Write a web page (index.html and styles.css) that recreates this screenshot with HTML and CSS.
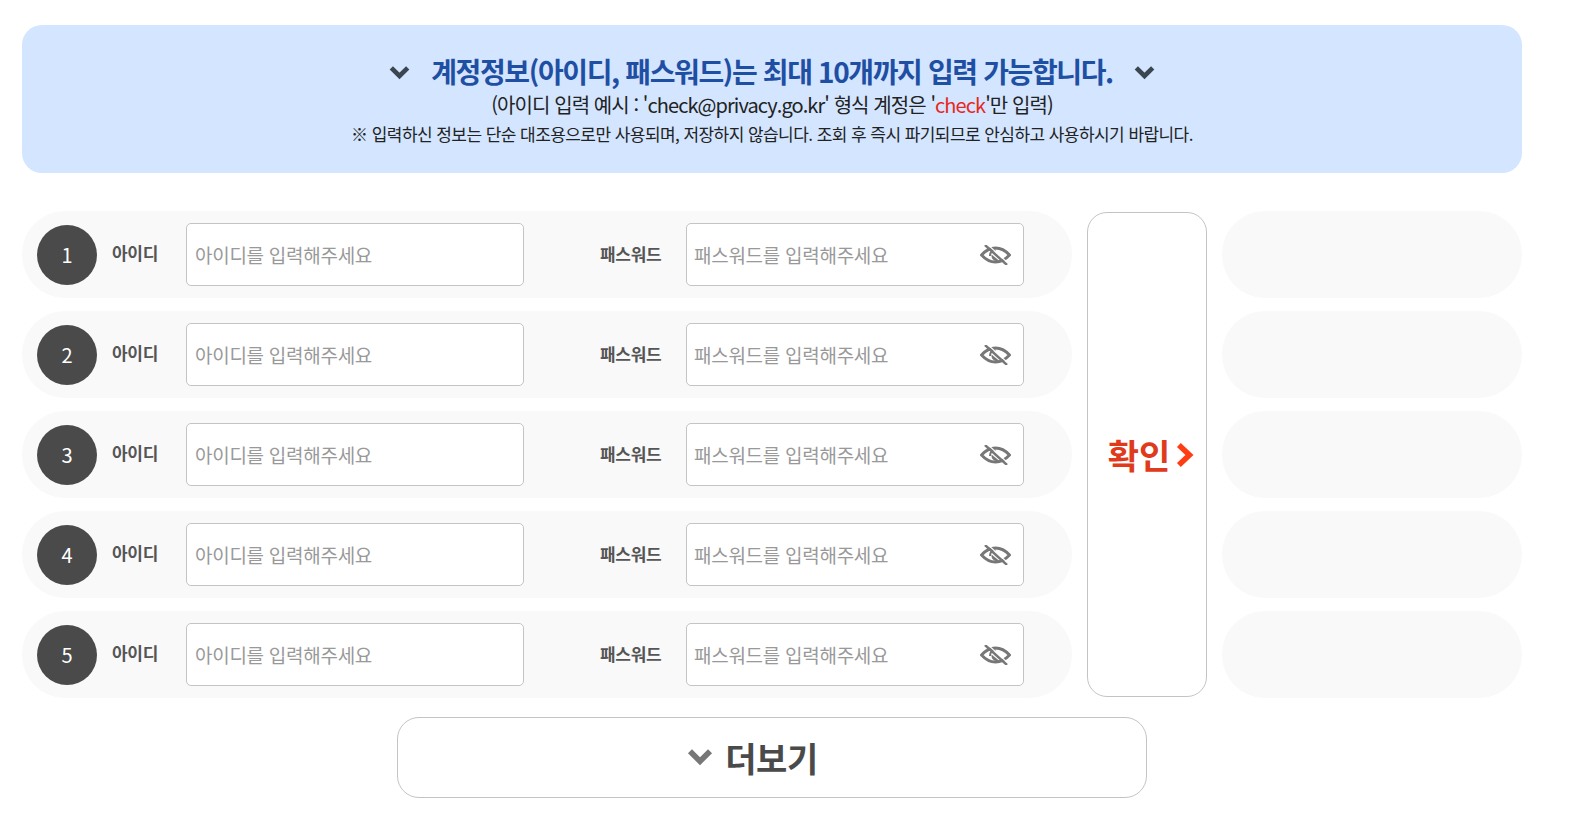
FILE: index.html
```html
<!DOCTYPE html>
<html lang="ko">
<head>
    <meta charset="UTF-8">
    <title>계정정보 입력</title>
    <link rel="stylesheet" href="styles.css">
</head>
<body>
    <svg width="0" height="0" class="defs">
        <symbol id="eye-off" viewBox="0 0 31 20">
            <path d="M1.500 10C6 5 10 3 15.500 3S25 5 29.500 10C25 15 21 17 15.500 17S6 15 1.500 10Z" fill="none" stroke="currentColor" stroke-width="2.800"/>
            <path d="M10 11a5.500 5.500 0 0 1 5.500-6" fill="none" stroke="currentColor" stroke-width="2"/>
            <path d="M11.500 9.500l8 6.500c-4 1-8.500-1-8-6.500Z" fill="currentColor"/>
            <path d="M5 0l22 20" fill="none" stroke="#fff" stroke-width="1.200" transform="translate(1.500 -1.500)"/>
            <path d="M5 0l22 20" fill="none" stroke="currentColor" stroke-width="2.400"/>
        </symbol>
        <symbol id="chev" viewBox="0 0 20 14">
            <path d="M2.200 2.500l7.800 7.800 7.800-7.800" fill="none" stroke="currentColor" stroke-width="4.400"/>
        </symbol>
    </svg>

    <div class="wrap">
        <div class="notice">
            <h2 class="notice-title">
                <svg class="chev-sm"><use href="#chev"/></svg>
                <span>계정정보(아이디, 패스워드)는 최대 10개까지 입력 가능합니다.</span>
                <svg class="chev-sm"><use href="#chev"/></svg>
            </h2>
            <p class="notice-sub">(아이디 입력 예시 : 'check@privacy.go.kr' 형식 계정은 '<em>check</em>'만 입력)</p>
            <p class="notice-small">※ 입력하신 정보는 단순 대조용으로만 사용되며, 저장하지 않습니다. 조회 후 즉시 파기되므로 안심하고 사용하시기 바랍니다.</p>
        </div>

        <div class="form-area">
            <div class="rows">
                <div class="row">
                    <div class="num">1</div>
                    <label class="lbl lbl-id">아이디</label>
                    <input class="field field-id" type="text" placeholder="아이디를 입력해주세요">
                    <label class="lbl lbl-pw">패스워드</label>
                    <div class="pw-box">
                        <input class="field field-pw" type="text" placeholder="패스워드를 입력해주세요">
                        <svg class="eye"><use href="#eye-off"/></svg>
                    </div>
                </div>
                <div class="row">
                    <div class="num">2</div>
                    <label class="lbl lbl-id">아이디</label>
                    <input class="field field-id" type="text" placeholder="아이디를 입력해주세요">
                    <label class="lbl lbl-pw">패스워드</label>
                    <div class="pw-box">
                        <input class="field field-pw" type="text" placeholder="패스워드를 입력해주세요">
                        <svg class="eye"><use href="#eye-off"/></svg>
                    </div>
                </div>
                <div class="row">
                    <div class="num">3</div>
                    <label class="lbl lbl-id">아이디</label>
                    <input class="field field-id" type="text" placeholder="아이디를 입력해주세요">
                    <label class="lbl lbl-pw">패스워드</label>
                    <div class="pw-box">
                        <input class="field field-pw" type="text" placeholder="패스워드를 입력해주세요">
                        <svg class="eye"><use href="#eye-off"/></svg>
                    </div>
                </div>
                <div class="row">
                    <div class="num">4</div>
                    <label class="lbl lbl-id">아이디</label>
                    <input class="field field-id" type="text" placeholder="아이디를 입력해주세요">
                    <label class="lbl lbl-pw">패스워드</label>
                    <div class="pw-box">
                        <input class="field field-pw" type="text" placeholder="패스워드를 입력해주세요">
                        <svg class="eye"><use href="#eye-off"/></svg>
                    </div>
                </div>
                <div class="row">
                    <div class="num">5</div>
                    <label class="lbl lbl-id">아이디</label>
                    <input class="field field-id" type="text" placeholder="아이디를 입력해주세요">
                    <label class="lbl lbl-pw">패스워드</label>
                    <div class="pw-box">
                        <input class="field field-pw" type="text" placeholder="패스워드를 입력해주세요">
                        <svg class="eye"><use href="#eye-off"/></svg>
                    </div>
                </div>
            </div>

            <button class="confirm" type="button">
                <span>확인</span>
                <svg class="confirm-arrow" viewBox="0 0 18 24"><path d="M3.500 3l9.500 9-9.500 9" fill="none" stroke="currentColor" stroke-width="5"/></svg>
            </button>

            <div class="results">
                <div class="result"></div>
                <div class="result"></div>
                <div class="result"></div>
                <div class="result"></div>
                <div class="result"></div>
            </div>
        </div>

        <button class="more" type="button">
            <svg class="chev-lg"><use href="#chev"/></svg>
            <span>더보기</span>
        </button>
    </div>
</body>
</html>
```

FILE: styles.css
```css
body {
    margin: 0;
    background: #fff;
    font-family: "Noto Sans CJK KR", "Noto Sans", sans-serif;
    color: #333;
}
.defs {
    display: block;
    height: 0;
}
.wrap {
    width: 1500px;
    margin-left: 22px;
    padding-top: 25px;
}

/* notice */
.notice {
    height: 148px;
    box-sizing: border-box;
    padding-top: 25px;
    background: #d3e5ff;
    border-radius: 20px;
    text-align: center;
}
.notice-title {
    display: flex;
    justify-content: center;
    align-items: center;
    gap: 21px;
    margin: 0;
    height: 42px;
    font-size: 28px;
    font-weight: 700;
    letter-spacing: -1.38px;
    color: #1f4fa3;
}
.chev-sm {
    width: 21px;
    height: 15px;
    margin-top: 2px;
    color: #3c4650;
}
.notice-sub {
    margin: -1px 0 0;
    height: 28px;
    line-height: 28px;
    font-size: 20px;
    letter-spacing: -0.92px;
    color: #222;
}
.notice-sub em {
    font-style: normal;
    color: #e8281c;
}
.notice-small {
    margin: 1px 0 0;
    line-height: 28px;
    font-size: 17px;
    letter-spacing: -0.56px;
    color: #222;
}

/* form */
.form-area {
    display: flex;
    margin-top: 38px;
}
.rows {
    display: flex;
    flex-direction: column;
    gap: 13px;
    width: 1050px;
}
.row {
    display: flex;
    align-items: center;
    height: 87px;
    padding-left: 15px;
    box-sizing: border-box;
    background: #f9f9f9;
    border-radius: 43px;
}
.num {
    flex: none;
    width: 60px;
    height: 60px;
    border-radius: 50%;
    background: #4a4a4a;
    color: #fff;
    font-size: 20px;
    line-height: 60px;
    text-align: center;
}
.lbl {
    flex: none;
    position: relative;
    font-size: 17px;
    font-weight: 700;
    letter-spacing: -0.3px;
    color: #555;
}
.lbl-id {
    top: -2px;
    width: 74px;
    margin-left: 15px;
}
.lbl-pw {
    top: -1px;
    width: 86px;
    margin-left: 76px;
}
.field {
    display: block;
    box-sizing: border-box;
    width: 338px;
    height: 63px;
    padding: 0 8px;
    background: #fff;
    border: 1px solid #c4c4c4;
    border-radius: 5px;
    font-family: inherit;
    font-size: 19px;
    letter-spacing: -0.28px;
}
.field::placeholder {
    color: #999;
    opacity: 1;
}
.field-pw {
    width: 338px;
    padding: 0 7px;
}
.pw-box {
    position: relative;
}
.eye {
    position: absolute;
    right: 13px;
    top: 22px;
    width: 31px;
    height: 20px;
    color: #777;
}

/* confirm */
.confirm {
    flex: none;
    display: flex;
    align-items: center;
    justify-content: center;
    gap: 5px;
    box-sizing: border-box;
    width: 120px;
    height: 485px;
    margin: 1px 0 0 15px;
    padding: 0 0 0 9px;
    background: #fff;
    border: 1px solid #c4c4c4;
    border-radius: 20px;
    font-family: inherit;
    font-size: 34px;
    font-weight: 700;
    color: #e03a1c;
}
.confirm-arrow {
    width: 20px;
    height: 28px;
    color: #ff3d12;
}

/* results */
.results {
    flex: none;
    display: flex;
    flex-direction: column;
    gap: 13px;
    width: 300px;
    margin-left: 15px;
}
.result {
    height: 87px;
    background: #f9f9f9;
    border-radius: 43px;
}

/* more */
.more {
    display: flex;
    align-items: center;
    justify-content: center;
    gap: 12px;
    box-sizing: border-box;
    width: 750px;
    height: 81px;
    margin: 19px 0 0 375px;
    padding: 0 39px 0 0;
    background: #fff;
    border: 1px solid #c4c4c4;
    border-radius: 22px;
    font-family: inherit;
    font-size: 34px;
    font-weight: 700;
    letter-spacing: -0.5px;
    color: #4a4a4a;
}
.chev-lg {
    width: 26px;
    height: 18px;
    margin-top: -2px;
    color: #777;
}
```
